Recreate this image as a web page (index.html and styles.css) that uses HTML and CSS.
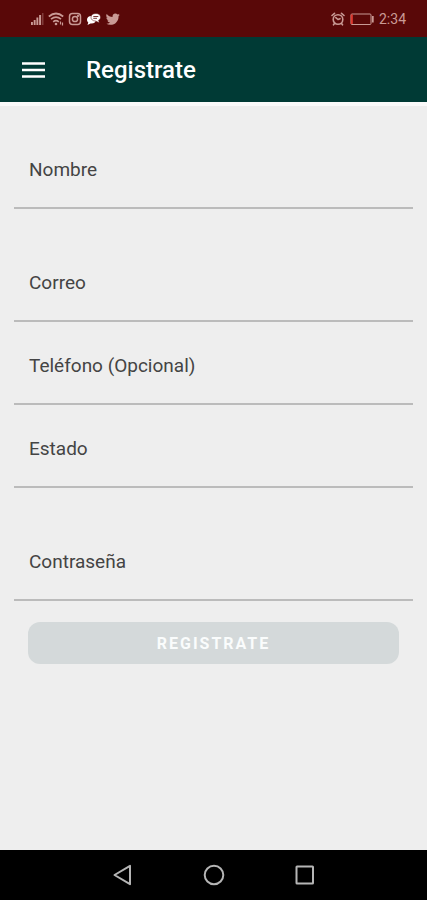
FILE: index.html
```html
<!DOCTYPE html>
<html lang="es">
<head>
  <meta charset="UTF-8">
  <meta name="viewport" content="width=device-width, initial-scale=1">
  <title>Registrate</title>
  <link rel="stylesheet" href="styles.css">
</head>
<body>

<div class="status-bar">
  <div class="status-icons">
    <!-- signal -->
    <svg width="14" height="14" viewBox="0 0 14 14" fill="currentColor">
      <path d="M1 10h1.900v3H1zM3.700 8h1.900v5H3.700zM6.400 5.500h1.900v7.500H6.400zM9.100 3h2v10h-2z"/>
      <path d="M12.200 1h1.200v12h-1.200z" opacity=".45"/>
    </svg>
    <!-- wifi -->
    <svg width="16" height="14" viewBox="0 0 16 14" fill="none" stroke="currentColor" stroke-width="1.700">
      <path d="M.8 4.500Q8-1.500 15.200 4.500M3 7.200Q8 3 13 7.200M5.200 9.800Q8 7.500 10.800 9.800"/>
      <circle cx="8" cy="12" r="1.300" fill="currentColor" stroke="none"/>
      <path d="M12.500 9.500v3M14.500 10.500v3" stroke-width="1.200"/>
    </svg>
    <!-- instagram -->
    <svg width="14" height="14" viewBox="0 0 14 14" fill="none" stroke="currentColor" stroke-width="1.500">
      <rect x="1.500" y="1.500" width="11" height="11" rx="3"/>
      <circle cx="7" cy="7" r="2.600"/>
      <circle cx="10" cy="4" r=".4"/>
    </svg>
    <!-- messages -->
    <svg width="16" height="14" viewBox="0 0 16 14">
      <path d="M5.500 4C2.500 4 1 5.700 1 7.800c0 1.200.5 2 1.300 2.700L1.500 13l3-1.500c3.500.3 5.500-1.200 5.500-3.700S8.500 4 5.500 4z" fill="#fff"/>
      <path d="M10 1.500C6.800 1.500 5 3 5 5.300s1.800 3.700 4.500 3.700l3.800 1.800-.7-2.600c1.200-.6 1.900-1.600 1.900-2.900 0-2.300-1.700-3.800-4.500-3.800z" fill="#fff" stroke="#590808" stroke-width=".5"/>
      <path d="M7.300 4.500h5M7.300 6.300h3.700" stroke="#590808" stroke-width=".8"/>
    </svg>
    <!-- twitter -->
    <svg width="14" height="14" viewBox="0 0 24 24" fill="currentColor">
      <path d="M23.600 4.900c-.9.400-1.800.7-2.800.8 1-.6 1.800-1.600 2.100-2.700-.9.600-2 1-3.100 1.200a4.900 4.900 0 0 0-8.400 4.500C7.400 8.500 3.700 6.500 1.300 3.500a4.900 4.900 0 0 0 1.500 6.600c-.8 0-1.600-.2-2.200-.6v.1c0 2.400 1.700 4.400 3.900 4.800-.7.200-1.500.2-2.200.1.600 1.900 2.400 3.300 4.600 3.400A9.900 9.900 0 0 1 0 19.900 14 14 0 0 0 7.500 22c9.100 0 14.300-7.700 14-14.600.8-.7 1.600-1.500 2.100-2.500z"/>
    </svg>
  </div>
  <div class="status-info">
    <!-- alarm -->
    <svg width="14" height="14" viewBox="0 0 14 14" fill="none" stroke="currentColor" stroke-width="1.600" stroke-linecap="round">
      <circle cx="7" cy="7.500" r="4.800"/>
      <path d="M7 7.500L4.800 5.700M7 7.500l2-.8M1 3.500L3.500 1.300M13 3.500L10.500 1.300M3.500 11.500l-1 1.300M10.500 11.500l1 1.300"/>
    </svg>
    <!-- battery -->
    <svg width="24" height="14" viewBox="0 0 24 14" fill="none" stroke="currentColor">
      <rect x="1" y="2" width="20" height="10.500" rx="1"/>
      <path d="M1.800 2.500v9.500" stroke="#e03a30" stroke-width="2"/>
      <path d="M22.800 4v6.500" stroke-width="1.800"/>
    </svg>
    <span>2:34</span>
  </div>
</div>

<header class="toolbar">
  <button class="menu-btn" type="button" aria-label="Menú">
    <svg width="24" height="18" viewBox="0 0 24 18" stroke="currentColor" stroke-width="2.400">
      <path d="M0 2.500h23M0 9h23M0 15.500h23"/>
    </svg>
  </button>
  <h1>Registrate</h1>
</header>

<main>
  <form class="register-form">
    <div class="field spaced">
      <label for="nombre">Nombre</label>
      <input type="text" id="nombre" name="nombre">
    </div>
    <div class="field">
      <label for="correo">Correo</label>
      <input type="email" id="correo" name="correo">
    </div>
    <div class="field">
      <label for="telefono">Teléfono (Opcional)</label>
      <input type="tel" id="telefono" name="telefono">
    </div>
    <div class="field spaced">
      <label for="estado">Estado</label>
      <input type="text" id="estado" name="estado">
    </div>
    <div class="field">
      <label for="contrasena">Contraseña</label>
      <input type="password" id="contrasena" name="contrasena">
    </div>
    <button class="submit-btn" type="submit" disabled>REGISTRATE</button>
  </form>
</main>

<nav class="nav-bar">
  <button type="button" aria-label="Atrás">
    <svg width="22" height="22" viewBox="0 0 22 22">
      <path d="M2.500 11L18 1.800v18.400z"/>
    </svg>
  </button>
  <button type="button" aria-label="Inicio">
    <svg width="22" height="22" viewBox="0 0 22 22">
      <circle cx="11" cy="11" r="9.300"/>
    </svg>
  </button>
  <button type="button" aria-label="Recientes">
    <svg width="22" height="22" viewBox="0 0 22 22">
      <rect x="2.500" y="2.500" width="16.500" height="17" rx=".5"/>
    </svg>
  </button>
</nav>

</body>
</html>
```

FILE: styles.css
```css
* {
  box-sizing: border-box;
}
body {
  font-family: Roboto, sans-serif;
  margin: 0;
  min-height: 100vh;
  display: flex;
  flex-direction: column;
  background: #eeeeee;
  color: #444;
}
button {
  font-family: inherit;
  border: none;
  padding: 0;
  background: none;
  color: inherit;
}
svg {
  display: block;
}

/* Status bar */
.status-bar {
  display: flex;
  justify-content: space-between;
  align-items: center;
  height: 37px;
  padding: 0 21px 0 30px;
  background: #590808;
  color: #c99a95;
}
.status-icons {
  display: flex;
  gap: 4px;
}
.status-info {
  display: flex;
  align-items: center;
  gap: 5px;
  font-size: 14px;
}

/* Toolbar */
.toolbar {
  display: flex;
  align-items: center;
  gap: 40px;
  height: 69px;
  padding: 0 22px;
  background: #003a35;
  border-bottom: 4px solid #fafafa;
  color: #fff;
}
.toolbar h1 {
  margin: 0;
  font-size: 24px;
  font-weight: 500;
}

/* Form */
main {
  flex: 1;
}
.register-form {
  padding: 20px 14px;
}
.field {
  padding-top: 33px;
}
.field.spaced {
  margin-bottom: 30px;
}
.field label {
  display: block;
  padding: 0 15px;
  font-size: 19px;
  line-height: 22px;
}
.field input {
  display: block;
  width: 100%;
  height: 28px;
  padding: 0 15px;
  border: none;
  border-bottom: 2px solid #bbb;
  background: none;
  font-family: inherit;
  font-size: 19px;
  outline: none;
}
.submit-btn {
  display: block;
  width: calc(100% - 28px);
  height: 42px;
  margin: 21px auto 0;
  border-radius: 12px;
  background: #d4d9da;
  color: #fafcfc;
  font-size: 16px;
  font-weight: 700;
  letter-spacing: 2px;
}

/* Android navigation */
.nav-bar {
  display: flex;
  justify-content: center;
  align-items: center;
  gap: 69px;
  height: 50px;
  background: #000;
}
.nav-bar svg {
  fill: none;
  stroke: #b5b5b5;
  stroke-width: 2;
  stroke-linejoin: round;
}
```
